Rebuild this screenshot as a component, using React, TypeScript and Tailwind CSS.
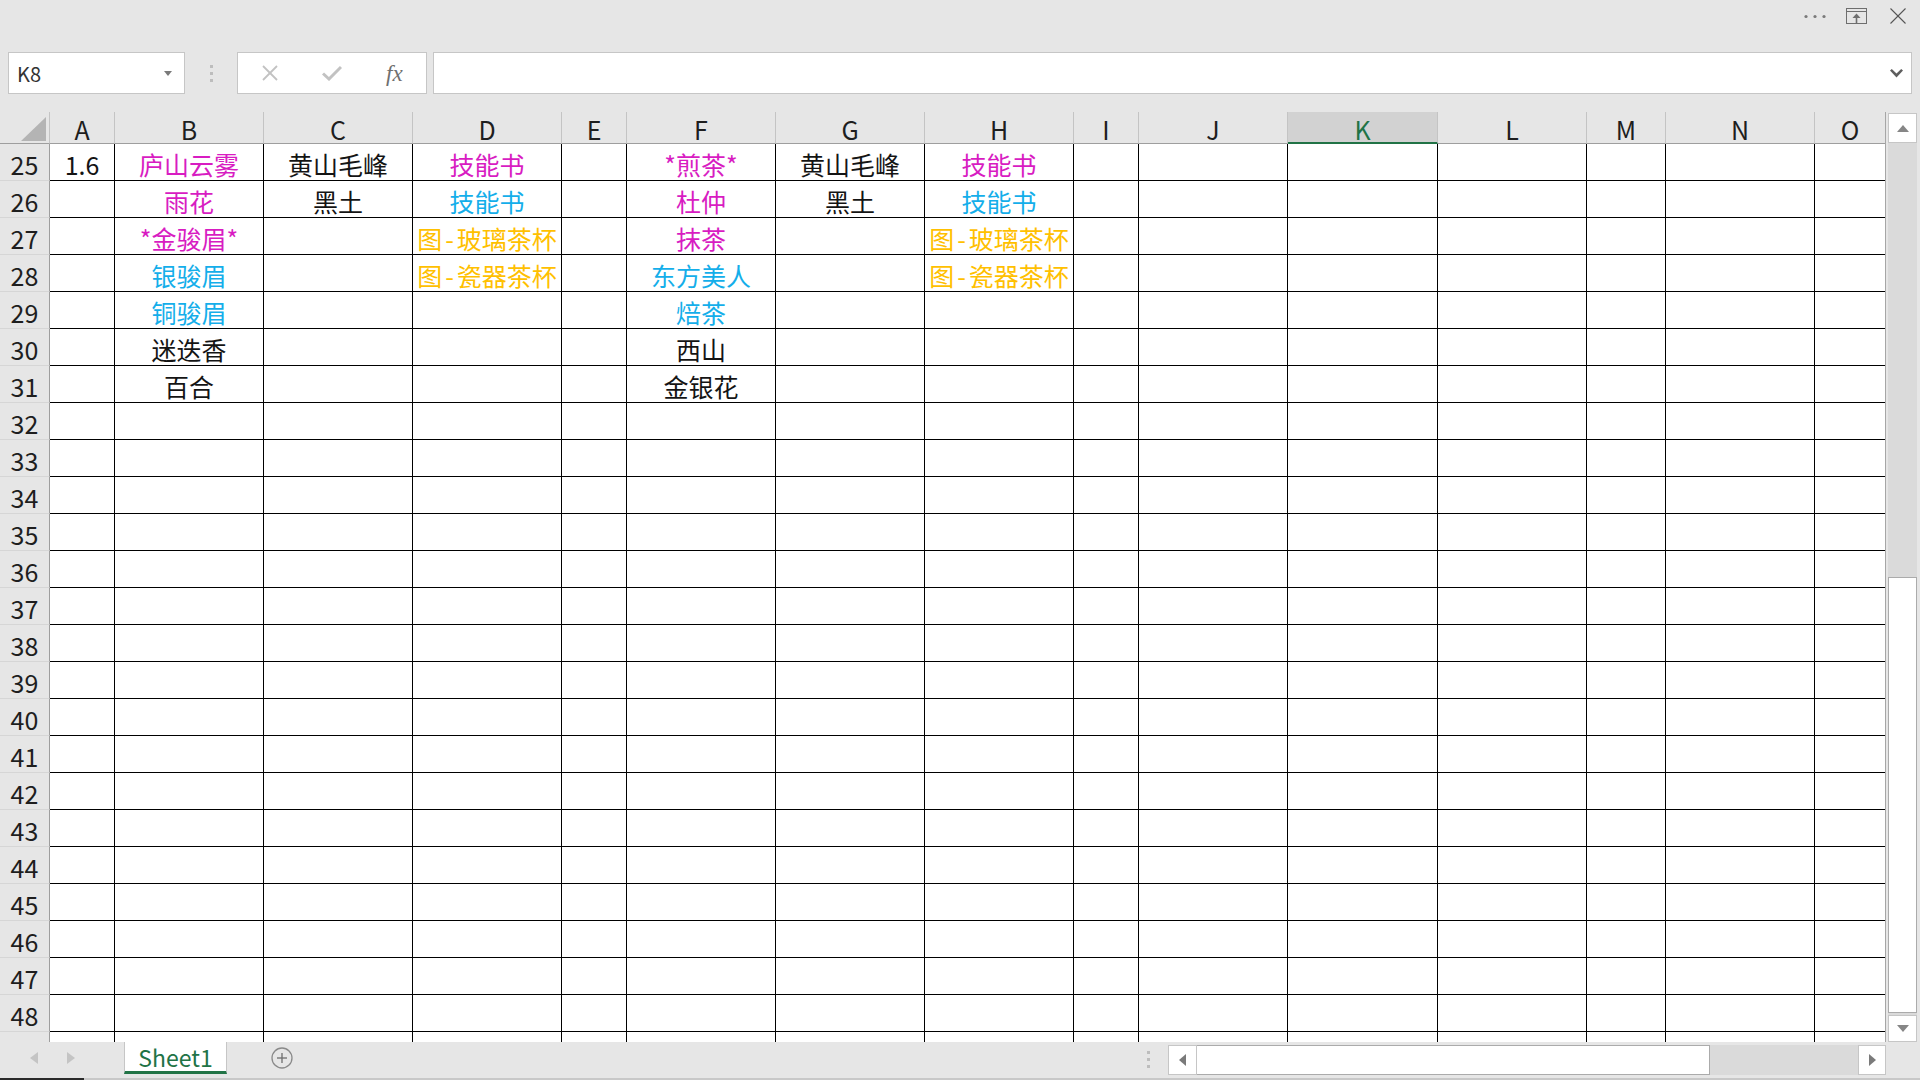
import React from 'react';

const COLS = ['A', 'B', 'C', 'D', 'E', 'F', 'G', 'H', 'I', 'J', 'K', 'L', 'M', 'N', 'O'];
const GRID =
  'grid grid-cols-[50px_65px_149px_149px_149px_65px_149px_149px_149px_65px_149px_150px_149px_79px_149px_70px]';

const M = 'text-[#d81cc2]';
const C = 'text-[#14aeea]';
const Y = 'text-[#ffc000]';
const K = 'text-[#141414]';

type Cell = { t: string; c: string };
const DATA: Record<number, Record<string, Cell>> = {
  25: {
    A: { t: '1.6', c: K },
    B: { t: '庐山云雾', c: M },
    C: { t: '黄山毛峰', c: K },
    D: { t: '技能书', c: M },
    F: { t: '*煎茶*', c: M },
    G: { t: '黄山毛峰', c: K },
    H: { t: '技能书', c: M },
  },
  26: {
    B: { t: '雨花', c: M },
    C: { t: '黑土', c: K },
    D: { t: '技能书', c: C },
    F: { t: '杜仲', c: M },
    G: { t: '黑土', c: K },
    H: { t: '技能书', c: C },
  },
  27: {
    B: { t: '*金骏眉*', c: M },
    D: { t: '图-玻璃茶杯', c: Y },
    F: { t: '抹茶', c: M },
    H: { t: '图-玻璃茶杯', c: Y },
  },
  28: {
    B: { t: '银骏眉', c: C },
    D: { t: '图-瓷器茶杯', c: Y },
    F: { t: '东方美人', c: C },
    H: { t: '图-瓷器茶杯', c: Y },
  },
  29: {
    B: { t: '铜骏眉', c: C },
    F: { t: '焙茶', c: C },
  },
  30: {
    B: { t: '迷迭香', c: K },
    F: { t: '西山', c: K },
  },
  31: {
    B: { t: '百合', c: K },
    F: { t: '金银花', c: K },
  },
};

const ROWS = Array.from({ length: 24 }, (_, i) => 25 + i);

function CellText({ t }: { t: string }) {
  const i = t.indexOf('-');
  if (i < 0) return <>{t}</>;
  return (
    <>
      {t.slice(0, i)}
      <span className="mx-[3px]">-</span>
      {t.slice(i + 1)}
    </>
  );
}

function TitleBar() {
  return (
    <div className="h-[52px] flex justify-end items-start pt-[8px] pr-[14px] gap-[18px]">
      <svg width="26" height="16" viewBox="0 0 26 16">
        <circle cx="4" cy="8.5" r="1.6" fill="#7a7a7a" />
        <circle cx="13" cy="8.5" r="1.6" fill="#7a7a7a" />
        <circle cx="22" cy="8.5" r="1.6" fill="#7a7a7a" />
      </svg>
      <svg width="21" height="16" viewBox="0 0 21 16" className="mr-[5px]">
        <rect x="0.5" y="0.5" width="20" height="15" fill="none" stroke="#6e6e6e" />
        <line x1="0.5" y1="3.5" x2="20.5" y2="3.5" stroke="#6e6e6e" />
        <line x1="10.5" y1="7" x2="10.5" y2="15" stroke="#6e6e6e" strokeWidth="1.6" />
        <path d="M6.5 10 L10.5 5.5 L14.5 10 Z" fill="#6e6e6e" />
      </svg>
      <svg width="16" height="16" viewBox="0 0 16 16">
        <line x1="0.5" y1="0.5" x2="15.5" y2="15.5" stroke="#555" strokeWidth="1.1" />
        <line x1="15.5" y1="0.5" x2="0.5" y2="15.5" stroke="#555" strokeWidth="1.1" />
      </svg>
    </div>
  );
}

function FormulaBar() {
  return (
    <div className="h-[42px] flex items-stretch pl-[8px] pr-[8px]">
      <div className="w-[177px] bg-white border border-[#c6c6c6] flex items-center justify-between pl-[8px] pr-[12px]">
        <span className="text-[20px] leading-none text-[#333] pt-[2px]">K8</span>
        <svg width="8" height="5" viewBox="0 0 8 5">
          <path d="M0 0 L8 0 L4 5 Z" fill="#7a7a7a" />
        </svg>
      </div>
      <div className="w-[52px] flex flex-col items-center justify-center gap-[4px]">
        <div className="w-[3px] h-[3px] bg-[#bdbdbd]" />
        <div className="w-[3px] h-[3px] bg-[#bdbdbd]" />
        <div className="w-[3px] h-[3px] bg-[#bdbdbd]" />
      </div>
      <div className="w-[190px] bg-white border border-[#c6c6c6] flex items-center pl-[24px]">
        <svg width="16" height="16" viewBox="0 0 16 16">
          <line x1="1" y1="1" x2="15" y2="15" stroke="#c2c2c2" strokeWidth="1.8" />
          <line x1="15" y1="1" x2="1" y2="15" stroke="#c2c2c2" strokeWidth="1.8" />
        </svg>
        <svg width="20" height="16" viewBox="0 0 20 16" className="ml-[44px]">
          <path d="M1 8.5 L7 14 L19 2" fill="none" stroke="#c2c2c2" strokeWidth="3" />
        </svg>
        <span className="ml-[44px] text-[23px] leading-none italic text-[#6f6f6f] font-['Liberation_Serif',serif]">
          fx
        </span>
      </div>
      <div className="w-[6px]" />
      <div className="flex-1 bg-white border border-[#c6c6c6] flex items-center justify-end pr-[8px]">
        <svg width="13" height="9" viewBox="0 0 13 9">
          <path d="M0 1.5 L1.8 0 L6.5 4.5 L11.2 0 L13 1.5 L6.5 8.5 Z" fill="#5e5e5e" />
        </svg>
      </div>
    </div>
  );
}

function Grid() {
  return (
    <div className="w-[1886px] h-[930px] overflow-hidden border-r border-r-[#a6a6a6] bg-white">
      <div className={GRID + ' h-[32px] bg-[#e6e6e6]'}>
        <div className="border-r border-r-[#c4c4c4] border-b border-b-[#9e9e9e] flex items-end justify-end pr-[3px] pb-[2px]">
          <svg width="25" height="24" viewBox="0 0 25 24">
            <path d="M25 0 L25 24 L0 24 Z" fill="#b4b4b4" />
          </svg>
        </div>
        {COLS.map((c) =>
          c === 'K' ? (
            <div
              key={c}
              className="bg-[#d2d2d2] border-r border-r-[#c4c4c4] border-b-2 border-b-[#217346] flex items-center justify-center pt-[4px] text-[25px] leading-none text-[#217346]"
            >
              {c}
            </div>
          ) : (
            <div
              key={c}
              className={
                (c === 'O' ? '' : 'border-r border-r-[#c4c4c4] ') +
                'border-b border-b-[#9e9e9e] flex items-center justify-center pt-[4px] text-[25px] leading-none text-[#1e1e1e]'
              }
            >
              {c}
            </div>
          )
        )}
      </div>
      {ROWS.map((r) => (
        <div key={r} className={GRID + ' h-[37px]'}>
          <div className="bg-[#e6e6e6] border-r border-r-[#9e9e9e] border-b border-b-[#d6d6d6] flex items-center justify-center pt-[5px] text-[25px] leading-none text-[#1e1e1e]">
            {r}
          </div>
          {COLS.map((c) => {
            const cell = DATA[r]?.[c];
            return (
              <div
                key={c}
                className={
                  (c === 'O' ? '' : 'border-r ') +
                  'border-b border-black flex items-center justify-center pt-[5px] text-[25px] leading-none whitespace-nowrap ' +
                  (cell ? cell.c : '')
                }
              >
                {cell ? <CellText t={cell.t} /> : null}
              </div>
            );
          })}
        </div>
      ))}
      <div className={GRID + ' h-[37px]'}>
        <div className="bg-[#e6e6e6] border-r border-r-[#9e9e9e]" />
        {COLS.map((c) => (
          <div key={c} className={c === 'O' ? '' : 'border-r border-black'} />
        ))}
      </div>
    </div>
  );
}

function VScroll() {
  return (
    <div className="w-[34px] h-[930px] pl-[2px] pr-[3px] flex flex-col">
      <div className="h-[30px] mt-[1px] bg-white border border-[#c6c6c6] flex items-center justify-center">
        <svg width="12" height="7" viewBox="0 0 12 7">
          <path d="M0 7 L6 0 L12 7 Z" fill="#868686" />
        </svg>
      </div>
      <div className="flex-1 bg-[#dadada] flex flex-col justify-end pb-[2px]">
        <div className="h-[436px] bg-white border border-[#ababab]" />
      </div>
      <div className="h-[27px] bg-white border border-[#c6c6c6] flex items-center justify-center">
        <svg width="12" height="7" viewBox="0 0 12 7">
          <path d="M0 0 L12 0 L6 7 Z" fill="#868686" />
        </svg>
      </div>
    </div>
  );
}

function TabBar() {
  return (
    <div className="h-[36px] flex items-start">
      <div className="w-[124px] h-[32px] flex items-center pl-[30px] gap-[29px]">
        <svg width="8" height="12" viewBox="0 0 8 12">
          <path d="M8 0 L8 12 L0 6 Z" fill="#c4c4c4" />
        </svg>
        <svg width="8" height="12" viewBox="0 0 8 12">
          <path d="M0 0 L0 12 L8 6 Z" fill="#c4c4c4" />
        </svg>
      </div>
      <div className="w-[103px] h-[32px] bg-white border-x border-x-[#c6c6c6] border-b-[3px] border-b-[#217346] flex items-center justify-center pt-[2px] text-[23px] leading-none text-[#217346]">
        Sheet1
      </div>
      <div className="w-[108px] h-[32px] flex items-center justify-center pl-[1px]">
        <svg width="22" height="22" viewBox="0 0 22 22">
          <circle cx="11" cy="11" r="10" fill="none" stroke="#8a8a8a" strokeWidth="1.3" />
          <line x1="6" y1="11" x2="16" y2="11" stroke="#6e6e6e" strokeWidth="1.3" />
          <line x1="11" y1="6" x2="11" y2="16" stroke="#6e6e6e" strokeWidth="1.3" />
        </svg>
      </div>
      <div className="flex-1" />
      <div className="w-[40px] h-[36px] flex flex-col items-center justify-center gap-[4px] pb-[1px]">
        <div className="w-[3px] h-[3px] bg-[#bdbdbd]" />
        <div className="w-[3px] h-[3px] bg-[#bdbdbd]" />
        <div className="w-[3px] h-[3px] bg-[#bdbdbd]" />
      </div>
      <div className="w-[718px] h-[30px] mt-[3px] flex">
        <div className="w-[29px] bg-white border border-[#c6c6c6] flex items-center justify-center">
          <svg width="7" height="12" viewBox="0 0 7 12">
            <path d="M7 0 L7 12 L0 6 Z" fill="#7a7a7a" />
          </svg>
        </div>
        <div className="w-[513px] bg-white border border-l-0 border-[#ababab]" />
        <div className="flex-1 bg-[#dadada]" />
        <div className="w-[28px] bg-white border border-[#c6c6c6] flex items-center justify-center">
          <svg width="7" height="12" viewBox="0 0 7 12">
            <path d="M0 0 L0 12 L7 6 Z" fill="#7a7a7a" />
          </svg>
        </div>
      </div>
      <div className="w-[34px]" />
    </div>
  );
}

export default function App() {
  return (
    <div className="w-[1920px] h-[1080px] bg-[#e6e6e6] flex flex-col overflow-hidden font-['Noto_Sans_CJK_SC',sans-serif]">
      <TitleBar />
      <FormulaBar />
      <div className="h-[18px]" />
      <div className="h-[930px] flex">
        <Grid />
        <VScroll />
      </div>
      <TabBar />
      <div className="h-[2px] flex">
        <div className="w-[84px] bg-[#2b2b2b]" />
        <div className="flex-1 bg-[#c8c8c8]" />
      </div>
    </div>
  );
}
